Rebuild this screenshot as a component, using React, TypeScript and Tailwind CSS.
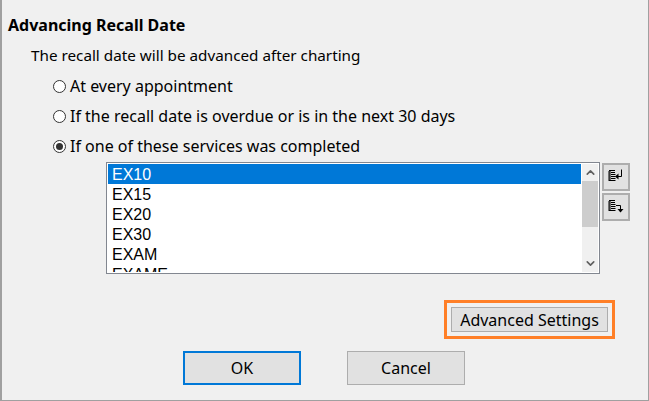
import { ChevronUp, ChevronDown } from "lucide-react";

const font = "font-['Noto_Sans','Liberation_Sans',sans-serif]";

const Radio = ({ label, checked }: { label: string; checked?: boolean }) => (
  <div className="flex items-center h-[30px] pl-[51px]">
    <div className="flex items-center justify-center w-[13px] h-[13px] rounded-full border border-[#333] bg-white">
      {checked && <div className="w-[7px] h-[7px] rounded-full bg-[#333]" />}
    </div>
    <span className="ml-1 -mt-px text-[16px] text-black">{label}</span>
  </div>
);

const ListIcon = ({ down }: { down?: boolean }) => (
  <svg width="16" height="16" viewBox="0 0 16 16" fill="none" stroke="#000" strokeWidth="1">
    <path d="M1 1.500h6M1 2v10M2 2v10M1 11.500h6.500M3 3.500h4M3 5.500h4.500M3 7.500h4.500M3 9.500h4.500" />
    {down ? (
      <>
        <path d="M8 6.500h4.500v4" />
        <path d="M9.500 10h6l-3 3.500z" fill="#000" stroke="none" />
      </>
    ) : (
      <>
        <path d="M13.500 0.500v7H9" />
        <path d="M7 7.500L10.500 4.500v6z" fill="#000" stroke="none" />
      </>
    )}
  </svg>
);

const SideButton = ({ down }: { down?: boolean }) => (
  <button className="flex items-center justify-center w-7 h-7 border-2 border-[#adadad] bg-[#e1e1e1]">
    <ListIcon down={down} />
  </button>
);

export default function App() {
  const rows = ["EX15", "EX20", "EX30", "EXAM", "EXAME"];
  return (
    <div className={`${font} w-[649px] h-[401px] overflow-hidden bg-[#f0f0f0] border-l-2 border-b border-r border-[#a0a0a0] text-black`}>
      <div className="pt-[14px] pl-[6px] h-[41px] text-[16px] leading-[22px] font-bold">Advancing Recall Date</div>
      <div className="pl-[29px] h-[30px] text-[15.25px] leading-[28px]">The recall date will be advanced after charting</div>
      <Radio label="At every appointment" />
      <Radio label="If the recall date is overdue or is in the next 30 days" />
      <Radio label="If one of these services was completed" checked />

      <div className="flex gap-[2px] pl-[104px] pt-[1px]">
        <div className="flex w-[494px] h-[112px] border border-[#828790] bg-white p-px overflow-hidden font-['Liberation_Sans',sans-serif]">
          <div className="flex-1 overflow-hidden">
            <div className="h-5 pl-1 bg-[#0078d7] text-white text-[16px] leading-[22px]">EX10</div>
            {rows.map((r) => (
              <div key={r} className="h-5 pl-1 text-[16px] leading-[22px]">{r}</div>
            ))}
          </div>
          <div className="flex flex-col w-[16px] ml-px bg-[#f0f0f0]">
            <div className="flex items-center justify-center h-[17px]">
              <ChevronUp size={13} strokeWidth={3} color="#606060" />
            </div>
            <div className="h-[46px] bg-[#cdcdcd]" />
            <div className="flex-1" />
            <div className="flex items-center justify-center h-[17px]">
              <ChevronDown size={13} strokeWidth={3} color="#606060" />
            </div>
          </div>
        </div>
        <div className="flex flex-col gap-[2px] pt-px">
          <SideButton />
          <SideButton down />
        </div>
      </div>

      <div className="flex justify-end pr-[33px] pt-[26px]">
        <div className="border-[3px] border-[#ff7f27] p-1">
          <button className="block w-[157px] h-[25px] border border-[#adadad] bg-[#e1e1e1] text-[16px] leading-none">Advanced Settings</button>
        </div>
      </div>

      <div className="flex gap-[46px] pl-[181px] pt-3">
        <button className="w-[118px] h-[34px] border-2 border-[#0078d7] bg-[#e1e1e1] text-[16px]">OK</button>
        <button className="w-[118px] h-[34px] border border-[#adadad] bg-[#e1e1e1] text-[16px]">Cancel</button>
      </div>
    </div>
  );
}
